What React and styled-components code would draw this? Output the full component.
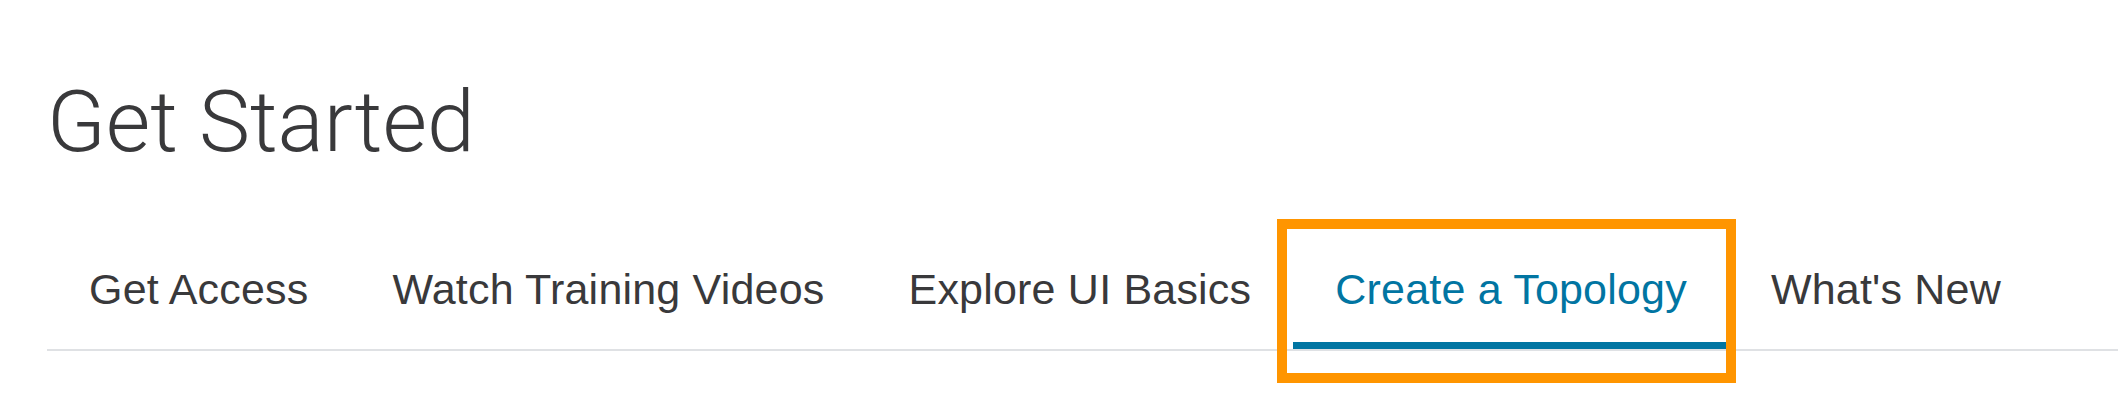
import React from "react";
import styled, { createGlobalStyle } from "styled-components";

const GlobalStyle = createGlobalStyle`
  html, body {
    margin: 0;
    padding: 0;
    background: #ffffff;
  }
  body {
    font-family: "Liberation Sans", Arial, sans-serif;
    color: #39393b;
  }
`;

const Page = styled.div`
  width: 2118px;
  height: 420px;
  padding-left: 47px;
  box-sizing: border-box;
  overflow: hidden;
`;

const Title = styled.h1`
  margin: 0;
  padding-top: 72px;
  font-family: Roboto, "Liberation Sans", sans-serif;
  font-weight: 300;
  font-size: 86px;
  line-height: 100px;
  color: #39393b;
`;

const TabList = styled.div`
  display: flex;
  margin-top: 64px;
  border-bottom: 2px solid #dfe1e4;
`;

const Tab = styled.div`
  position: relative;
  padding: 32px 42px;
  font-size: 43px;
  line-height: 42px;
  letter-spacing: 0.2px;
  white-space: nowrap;
  color: ${(p) => (p.$active ? "#0175a2" : "#39393b")};
  border-bottom: 7px solid ${(p) => (p.$active ? "#0175a2" : "transparent")};
`;

/* annotation frame drawn over the selected tab */
const Highlight = styled.span`
  position: absolute;
  left: -16px;
  right: -7px;
  top: -17px;
  bottom: -41px;
  border: 10px solid #ff9500;
  pointer-events: none;
`;

const tabs = [
  "Get Access",
  "Watch Training Videos",
  "Explore UI Basics",
  "Create a Topology",
  "What's New",
];

export default function App() {
  return (
    <>
      <GlobalStyle />
      <Page>
        <Title>Get Started</Title>
        <TabList>
          {tabs.map((t) => (
            <Tab key={t} $active={t === "Create a Topology"}>
              {t}
              {t === "Create a Topology" && <Highlight />}
            </Tab>
          ))}
        </TabList>
      </Page>
    </>
  );
}
